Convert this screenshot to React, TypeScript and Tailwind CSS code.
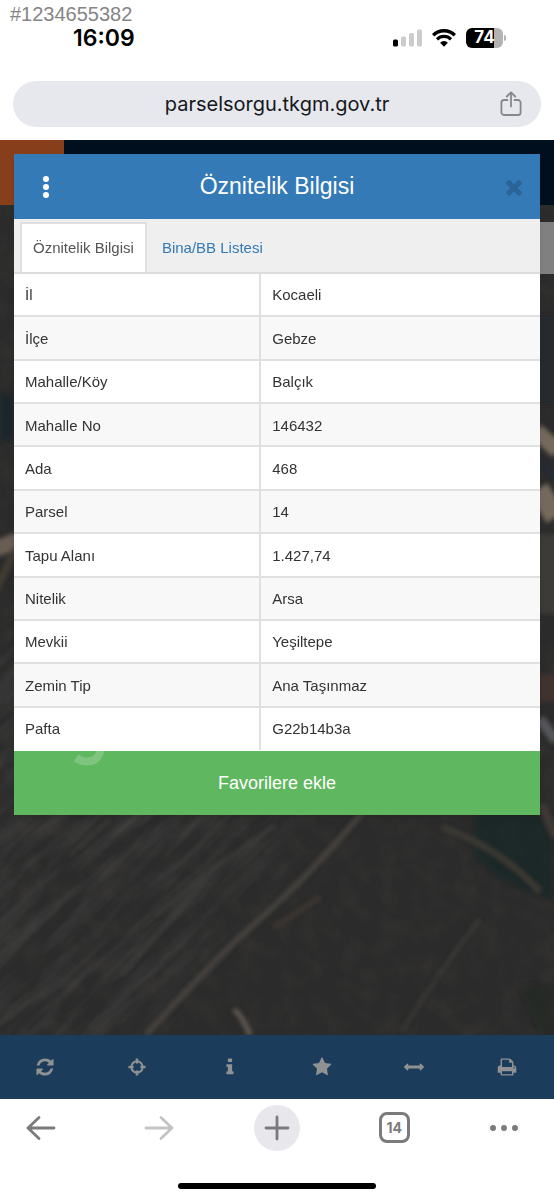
import { useState } from 'react';
import clsx from 'clsx';

const ROWS = [
  { label: 'İl', value: 'Kocaeli' },
  { label: 'İlçe', value: 'Gebze' },
  { label: 'Mahalle/Köy', value: 'Balçık' },
  { label: 'Mahalle No', value: '146432' },
  { label: 'Ada', value: '468' },
  { label: 'Parsel', value: '14' },
  { label: 'Tapu Alanı', value: '1.427,74' },
  { label: 'Nitelik', value: 'Arsa' },
  { label: 'Mevkii', value: 'Yeşiltepe' },
  { label: 'Zemin Tip', value: 'Ana Taşınmaz' },
  { label: 'Pafta', value: 'G22b14b3a' },
];

const TABS = ['Öznitelik Bilgisi', 'Bina/BB Listesi'];

const CLOSE_PATH =
  'M1490 1322q0 40-28 68l-136 136q-28 28-68 28t-68-28l-294-294-294 294q-28 28-68 28t-68-28l-136-136q-28-28-28-68t28-68l294-294-294-294q-28-28-28-68t28-68l136-136q28-28 68-28t68 28l294 294 294-294q28-28 68-28t68 28l136 136q28 28 28 68t-28 68l-294 294 294 294q28 28 28 68z';

const MAP_TOOLS = [
  {
    name: 'Yenile',
    path: 'M1639 1056q0 5-1 7-64 268-268 434.5t-478 166.5q-146 0-282.5-55t-243.5-157l-129 129q-19 19-45 19t-45-19-19-45v-448q0-26 19-45t45-19h448q26 0 45 19t19 45-19 45l-137 137q71 66 161 102t187 36q134 0 250-65t186-179q11-17 53-117 8-23 30-23h192q13 0 22.5 9.5t9.5 22.5zm25-800v448q0 26-19 45t-45 19h-448q-26 0-45-19t-19-45 19-45l138-138q-148-137-349-137-134 0-250 65t-186 179q-11 17-53 117-8 23-30 23h-199q-13 0-22.5-9.5t-9.5-22.5v-7q65-268 270-434.5t480-166.5q146 0 284 55.5t245 156.5l130-129q19-19 45-19t45 19 19 45z',
  },
  {
    name: 'Konum',
    path: 'M896 300a596 596 0 1 1 0 1192a596 596 0 1 1 0-1192zm0 180a416 416 0 1 0 0 832a416 416 0 1 0 0-832zM816 130h160q40 0 40 40v380q0 40-40 40h-160q-40 0-40-40v-380q0-40 40-40zM816 1202h160q40 0 40 40v380q0 40-40 40h-160q-40 0-40-40v-380q0-40 40-40zM170 776h380q40 0 40 40v160q0 40-40 40h-380q-40 0-40-40v-160q0-40 40-40zM1242 776h380q40 0 40 40v160q0 40-40 40h-380q-40 0-40-40v-160q0-40 40-40z',
  },
  {
    name: 'Bilgi',
    path: 'M1216 1344v128q0 26-19 45t-45 19h-512q-26 0-45-19t-19-45v-128q0-26 19-45t45-19h64v-384h-64q-26 0-45-19t-19-45v-128q0-26 19-45t45-19h384q26 0 45 19t19 45v576h64q26 0 45 19t19 45zm-128-1152v192q0 26-19 45t-45 19h-256q-26 0-45-19t-19-45v-192q0-26 19-45t45-19h256q26 0 45 19t19 45z',
  },
  {
    name: 'Favoriler',
    path: 'M1728 647q0 22-26 48l-363 354 86 500q1 7 1 20 0 21-10.5 35.5t-30.5 14.5q-19 0-40-12l-449-236-449 236q-22 12-40 12-21 0-31.5-14.5t-10.5-35.5q0-6 2-20l86-500-364-354q-25-27-25-48 0-37 56-46l502-73 225-455q19-41 49-41t49 41l225 455 502 73q56 9 56 46z',
  },
  {
    name: 'Ölçüm',
    path: 'M1792 896q0 26-19 45l-256 256q-19 19-45 19t-45-19-19-45v-128h-1024v128q0 26-19 45t-45 19-45-19l-256-256q-19-19-19-45t19-45l256-256q19-19 45-19t45 19 19 45v128h1024v-128q0-26 19-45t45-19 45 19l256 256q19 19 19 45z',
  },
  {
    name: 'Yazdır',
    path: 'M448 1536h896v-256h-896v256zm0-640h896v-384h-160q-40 0-68-28t-28-68v-160h-640v640zm1152 64q0-26-19-45t-45-19-45 19-19 45 19 45 45 19 45-19 19-45zm128 0v416q0 13-9.5 22.5t-22.5 9.5h-224v160q0 40-28 68t-68 28h-960q-40 0-68-28t-28-68v-160h-224q-13 0-22.5-9.5t-9.5-22.5v-416q0-79 56.5-135.5t135.5-56.5h64v-544q0-40 28-68t68-28h672q40 0 88 20t76 48l152 152q28 28 48 76t20 88v256h64q79 0 135.5 56.5t56.5 135.5z',
  },
];

function Glyph({ path, className }: { path: string; className: string }) {
  return (
    <svg viewBox="0 0 1792 1792" className={className} fill="currentColor" aria-hidden="true">
      <path d={path} />
    </svg>
  );
}

function StatusBar() {
  return (
    <div className="flex h-[76px] items-center justify-between pl-[73px] pr-12">
      <span className="font-['Inter',sans-serif] text-[23px] font-semibold text-black">16:09</span>
      <div className="flex items-center gap-[10px]">
        {/* Signal */}
        <svg width="29" height="18" viewBox="0 0 29 18" aria-hidden="true">
          <rect x="0" y="10.500" width="5" height="7" rx="1.500" fill="#000" />
          <rect x="8" y="7.500" width="5" height="10" rx="1.500" fill="#ccc" />
          <rect x="16" y="4" width="5" height="13.500" rx="1.500" fill="#ccc" />
          <rect x="24" y="0.500" width="5" height="17" rx="1.500" fill="#ccc" />
        </svg>
        {/* Wi-Fi */}
        <svg width="24" height="18" viewBox="0 0 24 18" fill="none" aria-hidden="true">
          <path d="M1.200 6.200a15.400 15.400 0 0 1 21.600 0" stroke="#000" strokeWidth="3.400" />
          <path d="M5 10.400a9.800 9.800 0 0 1 14 0" stroke="#000" strokeWidth="3.200" />
          <path d="M12 17.700l-3.900-4a5.600 5.600 0 0 1 7.800 0z" fill="#000" />
        </svg>
        {/* Battery */}
        <div className="flex items-center gap-px">
          <div className="flex h-[20px] w-[37px] items-center justify-center rounded-[6px] bg-linear-to-r from-black from-75% to-[#b3b3b3] to-75% font-['Inter',sans-serif] text-[17px] font-bold text-white">
            74
          </div>
          <div className="h-[6px] w-[2px] rounded-r-full bg-[#b3b3b3]" />
        </div>
      </div>
    </div>
  );
}

function AddressBar() {
  return (
    <div className="mx-[13px] mt-[5px] flex h-[46px] items-center rounded-full bg-[#e6e8ed] px-[18px]">
      <span className="w-6" />
      <span className="flex-1 text-center font-['Inter',sans-serif] text-[20px] text-[#15171c]">
        parselsorgu.tkgm.gov.tr
      </span>
      <button aria-label="Paylaş" className="flex w-6 justify-center text-[#85878b]">
        <svg width="22" height="26" viewBox="0 0 22 26" fill="none" stroke="currentColor" strokeWidth="1.800" strokeLinecap="round" strokeLinejoin="round">
          <path d="M7.500 9H4a2.600 2.600 0 0 0-2.600 2.600v9.800A2.600 2.600 0 0 0 4 24h14a2.600 2.600 0 0 0 2.600-2.600v-9.800A2.600 2.600 0 0 0 18 9h-3.500" />
          <path d="M11 15.500V1.800M6.800 5.500L11 1.400l4.200 4.100" />
        </svg>
      </button>
    </div>
  );
}

// Dimmed aerial view behind the dialog
function SatelliteMap() {
  return (
    <svg className="absolute inset-0 h-full w-full" viewBox="0 141 554 959" preserveAspectRatio="xMidYMid slice" aria-hidden="true">
      <defs>
        <filter id="furrows" x="0" y="0" width="100%" height="100%" colorInterpolationFilters="sRGB">
          <feTurbulence type="fractalNoise" baseFrequency="0.012 0.080" numOctaves="3" seed="7" />
          <feColorMatrix values="0 0 0 0 0.320  0 0 0 0 0.315  0 0 0 0 0.310  1.400 0 0 0 -0.520" />
        </filter>
        <filter id="soil" x="0" y="0" width="100%" height="100%" colorInterpolationFilters="sRGB">
          <feTurbulence type="fractalNoise" baseFrequency="0.050" numOctaves="4" seed="3" />
          <feColorMatrix values="0 0 0 0 0.250  0 0 0 0 0.240  0 0 0 0 0.220  1.000 0 0 0 -0.380" />
        </filter>
        <filter id="soft" x="-20%" y="-20%" width="140%" height="140%">
          <feGaussianBlur stdDeviation="2" />
        </filter>
        <filter id="fade" x="-20%" y="-20%" width="140%" height="140%">
          <feGaussianBlur stdDeviation="18" />
        </filter>
        <mask id="field" maskUnits="userSpaceOnUse" x="0" y="141" width="554" height="959">
          <path d="M-60 640H380L270 880 120 1060H-60z" fill="#fff" filter="url(#fade)" />
        </mask>
      </defs>
      <rect y="141" width="554" height="959" fill="#2b2b2b" />
      <rect y="141" width="554" height="959" filter="url(#soil)" opacity=".7" />
      <g mask="url(#field)" opacity=".6">
        <g transform="rotate(-43 200 900)">
          <rect x="-250" y="450" width="900" height="900" filter="url(#furrows)" />
        </g>
      </g>
      <g filter="url(#soft)" fill="none">
        <path d="M0 395h14v46H0z" fill="#1f272c" />
        <path d="M-4 550l22-9" stroke="#685d52" strokeWidth="16" />
        <path d="M-4 590l20-40" stroke="#443a32" strokeWidth="7" />
        <path d="M536 432l22 20" stroke="#75695c" strokeWidth="16" />
        <path d="M538 490l18 28" stroke="#75695c" strokeWidth="22" />
        <path d="M538 460l20 22" stroke="#252a30" strokeWidth="10" />
        <path d="M538 535h20v80h-20z" fill="#3d3b39" />
        <path d="M538 315h20v90h-20z" fill="#262b2d" />
        <path d="M538 675h20v28h-20z" fill="#40302d" />
        <path d="M540 720l16 22" stroke="#55565b" strokeWidth="10" />
        <path d="M475 815h79v85q-45-8-79-42z" fill="#192423" opacity=".6" />
        <path d="M542 806l14 32" stroke="#3f3934" strokeWidth="9" />
        <path d="M362 814q-55 65-100 104t-116 118" stroke="#4a4540" strokeWidth="5" />
        <path d="M320 898l-45 30" stroke="#403831" strokeWidth="4" />
        <path d="M442 828q60 22 98 65" stroke="#403c36" strokeWidth="5" />
        <path d="M480 920q-42 54-78 112" stroke="#3c3b37" strokeWidth="3" />
        <path d="M234 1010q10 10 16 26" stroke="#625950" strokeWidth="5" />
        <path d="M276 826q-60 40-120 90M206 880l-84 96M110 820l-40 36" stroke="#3e3d3b" strokeWidth="3" />
        <path d="M520 990q14-8 34 0v50h-10z" fill="#232a23" opacity=".7" />
      </g>
    </svg>
  );
}

function PropertyDialog() {
  const [active, setActive] = useState(TABS[0]);

  return (
    <section
      role="dialog"
      aria-label="Öznitelik Bilgisi"
      className="relative mx-[14px] mt-[14px] bg-white shadow-md"
    >
      <header className="flex h-[65px] items-center justify-between bg-[#347ab7] text-white">
        <button aria-label="Menü" className="flex w-16 flex-col items-center gap-[2px]">
          <span className="size-[6px] rounded-full bg-white" />
          <span className="size-[6px] rounded-full bg-white" />
          <span className="size-[6px] rounded-full bg-white" />
        </button>
        <h1 className="text-[23px]">Öznitelik Bilgisi</h1>
        <button aria-label="Kapat" className="flex w-16 justify-center pl-3 text-[#2b6497]">
          <Glyph path={CLOSE_PATH} className="size-6" />
        </button>
      </header>

      <div role="tablist" className="flex h-[55px] items-end border-b-2 border-[#ddd] bg-[#efefef] pl-[6px]">
        {TABS.map(tab => (
          <button
            key={tab}
            role="tab"
            aria-selected={tab === active}
            onClick={() => setActive(tab)}
            className={clsx(
              'h-[50px] border-2 border-b-0 px-[11px] text-[15px]',
              tab === active ? 'border-[#e0e0e0] bg-white text-[#555]' : 'ml-[2px] border-transparent text-[#337ab7]'
            )}
          >
            {tab}
          </button>
        ))}
      </div>

      <table className="h-[477px] w-full border-separate border-spacing-0 text-left text-[15px] text-[#333]">
        <tbody>
          {ROWS.map(row => (
            <tr key={row.label} className="group even:bg-[#f8f8f8]">
              <th
                scope="row"
                className="w-[47%] border-b-2 border-r-2 border-[#e0e0e0] pl-[11px] pt-[2px] font-normal group-last:border-b-white"
              >
                {row.label}
              </th>
              <td className="border-b-2 border-[#e0e0e0] pl-[11px] pt-[2px] group-last:border-b-white">{row.value}</td>
            </tr>
          ))}
        </tbody>
      </table>

      <button className="relative block h-16 w-full bg-[#5fb760] text-[18px] text-white">
        <svg className="absolute left-[57px] top-0" width="34" height="17" viewBox="0 0 34 17" fill="none" aria-hidden="true">
          <path d="M16.500 14.500q-7 0-14-4l5-7q6 4 12 2.500 4-1 6-6h8q-4 14.500-17 14.500z" fill="#fff" fillOpacity=".2" />
        </svg>
        Favorilere ekle
      </button>
    </section>
  );
}

function BrowserToolbar() {
  return (
    <footer className="bg-white pb-[11px] text-[#7b7b7e]">
      <nav className="flex h-[57px] items-center justify-between pl-[18px] pr-[35px]">
        <button aria-label="Geri" className="flex w-[46px] justify-center">
          <svg width="30" height="26" viewBox="0 0 30 26" fill="none" stroke="currentColor" strokeWidth="2.800" strokeLinecap="round" strokeLinejoin="round">
            <path d="M28 13H2M13 2.500L2 13l11 10.500" />
          </svg>
        </button>
        <button aria-label="İleri" className="flex w-[46px] justify-center text-[#c4c4c6]">
          <svg width="30" height="26" viewBox="0 0 30 26" fill="none" stroke="currentColor" strokeWidth="2.800" strokeLinecap="round" strokeLinejoin="round">
            <path d="M2 13h26M17 2.500L28 13 17 23.500" />
          </svg>
        </button>
        <button aria-label="Yeni sekme" className="flex size-[46px] items-center justify-center rounded-full bg-[#e8e7ec]">
          <svg width="26" height="26" viewBox="0 0 26 26" stroke="currentColor" strokeWidth="2.800" strokeLinecap="round">
            <path d="M2 13h22M13 2v22" />
          </svg>
        </button>
        <button aria-label="Sekmeler" className="flex w-[46px] justify-center">
          <span className="flex size-[31px] items-center justify-center rounded-[8px] border-[3px] border-current font-['Inter',sans-serif] text-[14px] font-bold">
            14
          </span>
        </button>
        <button aria-label="Diğer" className="flex w-[30px] items-center justify-center gap-[5px]">
          <span className="size-[6px] rounded-full bg-current" />
          <span className="size-[6px] rounded-full bg-current" />
          <span className="size-[6px] rounded-full bg-current" />
        </button>
      </nav>
      <div className="mx-auto mt-[27px] h-[6px] w-[198px] rounded-full bg-black" />
    </footer>
  );
}

export default function App() {
  return (
    <div className="relative flex min-h-screen flex-col bg-white font-['Liberation_Sans',Arial,sans-serif]">
      <div className="absolute left-[10px] top-[2px] text-[20px] leading-6 text-[#858585]">#1234655382</div>
      <div className="pb-[13px]">
        <StatusBar />
        <AddressBar />
      </div>

      <main className="relative flex flex-1 flex-col overflow-hidden">
        <SatelliteMap />
        {/* Site header, dimmed by the dialog backdrop */}
        <div className="absolute inset-x-0 top-0 flex h-[65px] bg-[#000f1d]">
          <div className="w-16 bg-[#873e1b]" />
        </div>
        <div className="absolute right-0 top-[82px] h-[52px] w-8 bg-[#808080]" />

        <PropertyDialog />

        <div className="relative mt-auto grid h-16 grid-cols-6 bg-[#1b3d5b]">
          {MAP_TOOLS.map(tool => (
            <button key={tool.name} aria-label={tool.name} className="flex items-center justify-center pr-[2px] text-[#8f9193]">
              <Glyph path={tool.path} className="size-5" />
            </button>
          ))}
        </div>
      </main>

      <BrowserToolbar />
    </div>
  );
}
